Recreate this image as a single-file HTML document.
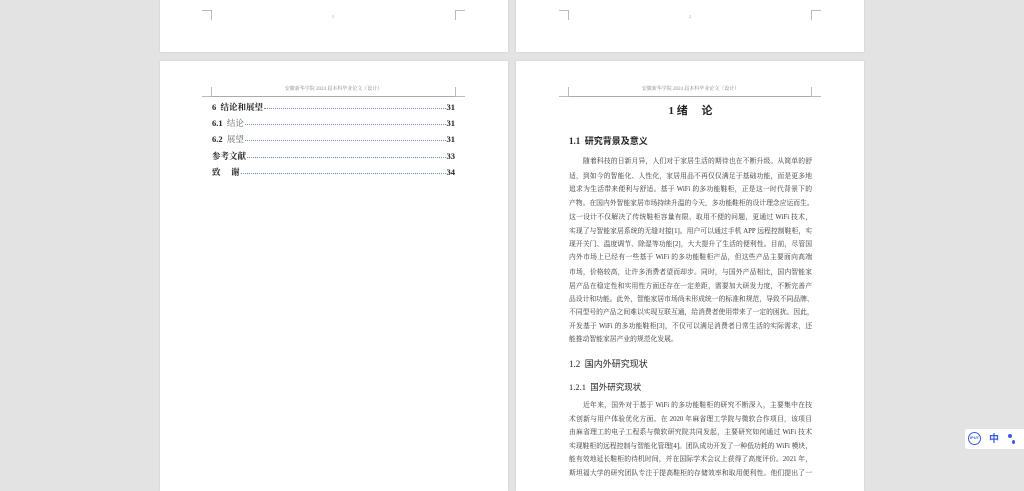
<!DOCTYPE html>
<html><head><meta charset="utf-8"><style>
*{margin:0;padding:0;box-sizing:border-box}
body{width:1024px;height:483px;background:#e3e3e3;position:relative;overflow:hidden;font-family:"Liberation Serif","Noto Serif CJK SC","Noto Sans CJK SC",serif;color:#222}
.pg{position:absolute;background:#fff;box-shadow:0 0 2px rgba(0,0,0,.12)}
.a{position:absolute}
.mk{position:absolute;border-color:#bbb;border-style:solid;border-width:0}
.hdr{position:absolute;font-size:5px;color:#888;text-align:center;white-space:nowrap}
.hl{position:absolute;height:1px;background:#aaa}
.toc{position:absolute;left:212px;width:243px;font-size:8.5px;line-height:10px;display:flex;white-space:nowrap;font-family:"Liberation Serif","Noto Serif CJK SC",serif}
.toc .d{flex:1;border-bottom:1px dotted #6a8fc0;margin:0 1px 3px}
.ln{position:absolute;left:569px;width:243px;font-size:6.8px;line-height:9px;white-space:nowrap;text-align:justify;text-align-last:justify;font-family:"Liberation Serif","Noto Serif CJK SC",serif;color:#333}
.ln.i{padding-left:14px}
.ln.l{text-align-last:left}
.h{font-family:"Liberation Serif","Noto Sans CJK SC",sans-serif}
</style></head><body>
<div class="pg" style="left:160px;top:-5px;width:348px;height:57px"></div>
<div class="pg" style="left:516px;top:-5px;width:348px;height:57px"></div>
<div class="pg" style="left:160px;top:61px;width:348px;height:430px"></div>
<div class="pg" style="left:516px;top:61px;width:348px;height:430px"></div>

<div class="mk" style="left:202px;top:10px;width:10px;height:10px;border-top-width:1px;border-right-width:1px"></div>
<div class="mk" style="left:455px;top:10px;width:10px;height:10px;border-top-width:1px;border-left-width:1px"></div>
<div class="mk" style="left:559px;top:10px;width:10px;height:10px;border-top-width:1px;border-right-width:1px"></div>
<div class="mk" style="left:811px;top:10px;width:10px;height:10px;border-top-width:1px;border-left-width:1px"></div>
<div class="a" style="left:332px;top:14px;font-size:4px;color:#88a">1</div>
<div class="a" style="left:689px;top:14px;font-size:4px;color:#999">2</div>

<div class="hdr" style="left:212px;width:243px;top:85px">安徽新华学院 2024 届本科毕业论文（设计）</div>
<div class="hl" style="left:212px;width:243px;top:96px"></div>
<div class="mk" style="left:202px;top:87px;width:10px;height:10px;border-bottom-width:1px;border-right-width:1px"></div>
<div class="mk" style="left:455px;top:87px;width:10px;height:10px;border-bottom-width:1px;border-left-width:1px"></div>
<div class="toc" style="top:102px;font-weight:bold"><span>6&nbsp; 结论和展望</span><span class="d"></span><span>31</span></div>
<div class="toc" style="top:118px"><span><b>6.1</b>&nbsp; <span style="color:#666">结论</span></span><span class="d"></span><b>31</b></div>
<div class="toc" style="top:134px"><span><b>6.2</b>&nbsp; <span style="color:#666">展望</span></span><span class="d"></span><b>31</b></div>
<div class="toc" style="top:151px;font-weight:bold"><span>参考文献</span><span class="d"></span><span>33</span></div>
<div class="toc" style="top:167px;font-weight:bold"><span>致&nbsp;&nbsp;&nbsp;&nbsp;&nbsp;谢</span><span class="d"></span><span>34</span></div>

<div class="hdr" style="left:569px;width:243px;top:85px">安徽新华学院 2024 届本科毕业论文（设计）</div>
<div class="hl" style="left:569px;width:243px;top:96px"></div>
<div class="mk" style="left:559px;top:87px;width:10px;height:10px;border-bottom-width:1px;border-right-width:1px"></div>
<div class="mk" style="left:811px;top:87px;width:10px;height:10px;border-bottom-width:1px;border-left-width:1px"></div>
<div class="a h" style="left:569px;width:243px;top:102px;text-align:center;font-size:11px;font-weight:bold">1 绪&nbsp;&nbsp;&nbsp;&nbsp;&nbsp;论</div>
<div class="a h" style="left:569px;top:134px;font-size:9px;font-weight:bold">1.1&nbsp; 研究背景及意义</div>

<div class="ln i" style="top:157px">随着科技的日新月异，人们对于家居生活的期待也在不断升级。从简单的舒</div>
<div class="ln" style="top:172px">适，到如今的智能化、人性化，家居用品不再仅仅满足于基础功能，而是更多地</div>
<div class="ln" style="top:185px">追求为生活带来便利与舒适。基于 WiFi 的多功能鞋柜，正是这一时代背景下的</div>
<div class="ln" style="top:199px">产物。在国内外智能家居市场持续升温的今天，多功能鞋柜的设计理念应运而生。</div>
<div class="ln" style="top:213px">这一设计不仅解决了传统鞋柜容量有限、取用不便的问题，更通过 WiFi 技术，</div>
<div class="ln" style="top:227px">实现了与智能家居系统的无缝对接[1]。用户可以通过手机 APP 远程控制鞋柜，实</div>
<div class="ln" style="top:240px">现开关门、温度调节、除湿等功能[2]，大大提升了生活的便利性。目前，尽管国</div>
<div class="ln" style="top:253px">内外市场上已经有一些基于 WiFi 的多功能鞋柜产品，但这些产品主要面向高端</div>
<div class="ln" style="top:268px">市场，价格较高，让许多消费者望而却步。同时，与国外产品相比，国内智能家</div>
<div class="ln" style="top:282px">居产品在稳定性和实用性方面还存在一定差距，需要加大研发力度，不断完善产</div>
<div class="ln" style="top:295px">品设计和功能。此外，智能家居市场尚未形成统一的标准和规范，导致不同品牌、</div>
<div class="ln" style="top:308px">不同型号的产品之间难以实现互联互通，给消费者使用带来了一定的困扰。因此，</div>
<div class="ln" style="top:322px">开发基于 WiFi 的多功能鞋柜[3]，不仅可以满足消费者日常生活的实际需求，还</div>
<div class="ln l" style="top:335px">能推动智能家居产业的规范化发展。</div>
<div class="a h" style="left:569px;top:357px;font-size:9px">1.2&nbsp; 国内外研究现状</div>
<div class="a h" style="left:569px;top:381px;font-size:8.5px">1.2.1&nbsp; 国外研究现状</div>
<div class="ln i" style="top:401px">近年来，国外对于基于 WiFi 的多功能鞋柜的研究不断深入，主要集中在技</div>
<div class="ln" style="top:415px">术创新与用户体验优化方面。在 2020 年麻省理工学院与微软合作项目，该项目</div>
<div class="ln" style="top:428px">由麻省理工的电子工程系与微软研究院共同发起，主要研究如何通过 WiFi 技术</div>
<div class="ln" style="top:442px">实现鞋柜的远程控制与智能化管理[4]。团队成功开发了一种低功耗的 WiFi 模块，</div>
<div class="ln" style="top:455px">能有效地延长鞋柜的待机时间，并在国际学术会议上获得了高度评价。2021 年，</div>
<div class="ln" style="top:469px">斯坦福大学的研究团队专注于提高鞋柜的存储效率和取用便利性。他们提出了一</div>

<div class="a" style="left:965px;top:429px;width:59px;height:20px;background:#fff;border-radius:3px 0 0 3px"></div>
<div class="a" style="left:968px;top:432px;width:13px;height:13px;border:1.5px solid #3b5bdb;border-radius:50%;font-size:4px;color:#3b5bdb;text-align:center;line-height:10px;font-family:'Liberation Sans',sans-serif;font-weight:bold">IPUT</div>
<div class="a" style="left:989px;top:432px;font-size:10px;color:#3b5bdb;font-weight:bold;font-family:'Noto Sans CJK SC',sans-serif;line-height:12px">中</div>
<div class="a" style="left:1008px;top:434px;width:4px;height:4px;border-radius:50%;background:#3b5bdb"></div>
<div class="a" style="left:1012px;top:440px;width:3px;height:4px;border-radius:50%;background:#3b5bdb"></div>
</body></html>
